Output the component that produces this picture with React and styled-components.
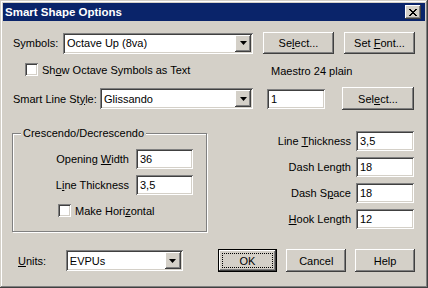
import React from "react";
import styled, { createGlobalStyle } from "styled-components";

const Global = createGlobalStyle`
  html, body { margin: 0; padding: 0; background: #D4D0C8; }
  body {
    font-family: "Liberation Sans", Arial, sans-serif;
    font-size: 11px;
    color: #000;
  }
  * { box-sizing: border-box; }
`;

const raised = `
  box-shadow: inset -1px -1px #404040, inset 1px 1px #ffffff,
    inset -2px -2px #808080, inset 2px 2px #D4D0C8;
`;
const sunken = `
  box-shadow: inset 1px 1px #808080, inset -1px -1px #ffffff,
    inset 2px 2px #404040, inset -2px -2px #D4D0C8;
`;

const Window = styled.div`
  width: 428px;
  height: 288px;
  padding: 3px;
  background: #D4D0C8;
  box-shadow: inset -1px -1px #404040, inset 1px 1px #D4D0C8,
    inset -2px -2px #808080, inset 2px 2px #ffffff;
  display: flex;
  flex-direction: column;
`;

const TitleBar = styled.div`
  height: 18px;
  background: #0A246A;
  color: #fff;
  display: flex;
  align-items: center;
  padding: 0 4px 0 2px;
  font-weight: bold;
  font-size: 11.5px;
`;

const CloseButton = styled.div`
  margin-left: auto;
  width: 16px;
  height: 14px;
  background: #D4D0C8;
  ${raised}
  display: flex;
  align-items: center;
  justify-content: center;
`;

const Body = styled.div`
  padding: 11px 10px 0 10px;
  display: flex;
  flex-direction: column;
`;

const Row = styled.div`
  display: flex;
  align-items: center;
  height: ${(p) => p.$h}px;
  margin-top: ${(p) => p.$mt || 0}px;
`;

const Label = styled.span`
  width: ${(p) => p.$w}px;
  padding-left: ${(p) => p.$pl || 0}px;
  white-space: pre;
`;

const U = styled.span`
  text-decoration: underline;
`;

const Combo = styled.div`
  width: ${(p) => p.$w}px;
  height: 21px;
  background: #fff;
  ${sunken}
  display: flex;
  align-items: center;
  padding: 2px;
`;

const ComboText = styled.span`
  flex: 1;
  padding-left: 2px;
  white-space: pre;
`;

const ArrowButton = styled.span`
  width: 16px;
  height: 17px;
  background: #D4D0C8;
  ${raised}
  display: flex;
  align-items: center;
  justify-content: center;
`;

const Button = styled.div`
  width: ${(p) => p.$w}px;
  height: ${(p) => p.$h || 22}px;
  margin-left: ${(p) => p.$ml || 0}px;
  background: #D4D0C8;
  ${raised}
  display: flex;
  align-items: center;
  justify-content: center;
  white-space: pre;
`;

const DefaultButton = styled.div`
  width: ${(p) => p.$w}px;
  height: 23px;
  margin-left: ${(p) => p.$ml || 0}px;
  border: 1px solid #000;
  background: #D4D0C8;
  ${raised}
  display: flex;
  align-items: center;
  justify-content: center;
  padding: 3px;
`;

const FocusRect = styled.div`
  flex: 1;
  align-self: stretch;
  border: 1px dotted #000;
  display: flex;
  align-items: center;
  justify-content: center;
`;

const TextInput = styled.div`
  width: ${(p) => p.$w}px;
  height: 20px;
  margin-left: ${(p) => p.$ml || 0}px;
  background: #fff;
  ${sunken}
  display: flex;
  align-items: center;
  padding-left: 4px;
`;

const CheckRow = styled.div`
  display: flex;
  align-items: center;
  margin-left: ${(p) => p.$ml || 0}px;
  width: ${(p) => (p.$w ? `${p.$w}px` : "auto")};
  white-space: pre;
`;

const CheckBox = styled.span`
  width: 13px;
  height: 13px;
  background: #fff;
  ${sunken}
  margin-right: 4px;
  flex: none;
`;

const Note = styled.span`
  padding-top: 3px;
  white-space: pre;
`;

const Lower = styled.div`
  display: flex;
  margin-top: 17px;
`;

const GroupBox = styled.div`
  position: relative;
  margin-left: -1px;
  margin-top: 6px;
  width: 195px;
  height: 99px;
  border: 1px solid #808080;
  box-shadow: inset 1px 1px #ffffff, 1px 1px #ffffff;
  padding: 15px 13px 0 0;
  display: flex;
  flex-direction: column;
  align-items: flex-end;
  gap: 6px;
`;

const GroupTitle = styled.span`
  position: absolute;
  left: 8px;
  top: -7px;
  padding: 0 2px;
  background: #D4D0C8;
  white-space: pre;
`;

const FieldRow = styled.div`
  display: flex;
  align-items: center;
  justify-content: flex-end;
  height: 20px;
`;

const FieldLabel = styled.span`
  margin-right: ${(p) => p.$gap}px;
  white-space: pre;
`;

const GroupCheck = styled(CheckRow)`
  align-self: flex-start;
  margin-left: 45px;
  margin-top: 3px;
`;

const RightFields = styled.div`
  margin-left: auto;
  margin-right: 1px;
  padding-top: 4px;
  display: flex;
  flex-direction: column;
  gap: 6px;
`;

const Arrow = () => (
  <svg width="7" height="4" viewBox="0 0 7 4">
    <polygon points="0,0 7,0 3.5,4" fill="#000" />
  </svg>
);

const CloseGlyph = () => (
  <svg width="8" height="7" viewBox="0 0 8 7" shapeRendering="crispEdges">
    <path
      d="M0 0h2v1h-2zM6 0h2v1h-2zM1 1h2v1h-2zM5 1h2v1h-2zM2 2h4v1h-4zM3 3h2v1h-2zM2 4h4v1h-4zM1 5h2v1h-2zM5 5h2v1h-2zM0 6h2v1h-2zM6 6h2v1h-2z"
      fill="#000"
    />
  </svg>
);

const ComboBox = ({ w, value }) => (
  <Combo $w={w}>
    <ComboText>{value}</ComboText>
    <ArrowButton>
      <Arrow />
    </ArrowButton>
  </Combo>
);

export default function App() {
  return (
    <>
      <Global />
      <Window>
        <TitleBar>
          Smart Shape Options
          <CloseButton>
            <CloseGlyph />
          </CloseButton>
        </TitleBar>
        <Body>
          <Row $h={22}>
            <Label $w={50}>Symbols:</Label>
            <ComboBox w={190} value="Octave Up (8va)" />
            <Button $w={71} $ml={10}>
              {"Se"}<U>l</U>{"ect..."}
            </Button>
            <Button $w={71} $ml={10}>
              {"Set "}<U>F</U>{"ont..."}
            </Button>
          </Row>
          <Row $h={13} $mt={9}>
            <CheckRow $ml={12} $w={246}>
              <CheckBox />
              {"Sh"}<U>o</U>{"w Octave Symbols as Text"}
            </CheckRow>
            <Note>Maestro 24 plain</Note>
          </Row>
          <Row $h={23} $mt={11}>
            <Label $w={87}>
              {"Smart Line St"}<U>y</U>{"le:"}
            </Label>
            <ComboBox w={153} value="Glissando" />
            <TextInput $w={58} $ml={14}>
              1
            </TextInput>
            <Button $w={72} $h={23} $ml={17}>
              {"Sel"}<U>e</U>{"ct..."}
            </Button>
          </Row>
          <Lower>
            <GroupBox>
              <GroupTitle>Crescendo/Decrescendo</GroupTitle>
              <FieldRow>
                <FieldLabel $gap={7}>
                  {"Opening "}<U>W</U>{"idth"}
                </FieldLabel>
                <TextInput $w={57}>36</TextInput>
              </FieldRow>
              <FieldRow>
                <FieldLabel $gap={7}>
                  {"L"}<U>i</U>{"ne Thickness"}
                </FieldLabel>
                <TextInput $w={57}>3,5</TextInput>
              </FieldRow>
              <GroupCheck>
                <CheckBox />
                {"Make Hori"}<U>z</U>{"ontal"}
              </GroupCheck>
            </GroupBox>
            <RightFields>
              <FieldRow>
                <FieldLabel $gap={5}>
                  {"Line "}<U>T</U>{"hickness"}
                </FieldLabel>
                <TextInput $w={58}>3,5</TextInput>
              </FieldRow>
              <FieldRow>
                <FieldLabel $gap={5}>
                  {"Dash Len"}<U>g</U>{"th"}
                </FieldLabel>
                <TextInput $w={58}>18</TextInput>
              </FieldRow>
              <FieldRow>
                <FieldLabel $gap={5}>
                  {"Dash S"}<U>p</U>{"ace"}
                </FieldLabel>
                <TextInput $w={58}>18</TextInput>
              </FieldRow>
              <FieldRow>
                <FieldLabel $gap={5}>
                  <U>H</U>{"ook Length"}
                </FieldLabel>
                <TextInput $w={58}>12</TextInput>
              </FieldRow>
            </RightFields>
          </Lower>
          <Row $h={23} $mt={17}>
            <Label $w={53} $pl={5}>
              <U>U</U>{"nits:"}
            </Label>
            <ComboBox w={117} value="EVPUs" />
            <DefaultButton $w={60} $ml={35}>
              <FocusRect>OK</FocusRect>
            </DefaultButton>
            <Button $w={60} $h={23} $ml={9}>
              Cancel
            </Button>
            <Button $w={60} $h={23} $ml={9}>
              Help
            </Button>
          </Row>
        </Body>
      </Window>
    </>
  );
}
